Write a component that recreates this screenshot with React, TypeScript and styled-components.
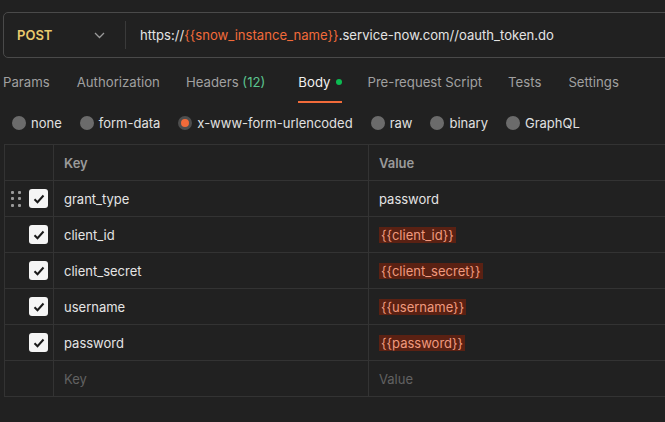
import React from "react";
import styled, { createGlobalStyle } from "styled-components";

const Global = createGlobalStyle`
  html, body { margin: 0; padding: 0; background: #212121; }
  body { font-family: Inter, "Noto Sans", sans-serif; color: #e6e6e6; overflow: hidden; }
  * { box-sizing: border-box; }
`;

const Page = styled.div`
  width: 665px;
  height: 422px;
  background: #212121;
  overflow: hidden;
  padding: 12px 0 0 3px;
`;

const UrlBar = styled.div`
  display: flex;
  align-items: center;
  height: 46px;
  width: 700px;
  border: 1px solid #4a4a4a;
  border-radius: 5px;
`;

const Method = styled.div`
  display: flex;
  align-items: center;
  justify-content: space-between;
  width: 121px;
  padding: 0 20px 0 13px;
  font-size: 13px;
  font-weight: 600;
  color: #e9cb6d;
`;

const Divider = styled.div`
  width: 1px;
  height: 28px;
  background: #3a3a3a;
`;

const Url = styled.div`
  padding-left: 14px;
  font-size: 13.1px;
  color: #e4e4e4;
  white-space: nowrap;
`;

const Var = styled.span`
  color: #f26b3a;
`;

const Tabs = styled.div`
  display: flex;
  height: 42px;
  margin-top: 3px;
`;

const Tab = styled.div<{ $active?: boolean; $gap: number }>`
  display: flex;
  align-items: center;
  gap: 6px;
  margin-right: ${(p) => p.$gap}px;
  font-size: 13.2px;
  color: ${(p) => (p.$active ? "#f0f0f0" : "#a0a0a0")};
  border-bottom: 2px solid ${(p) => (p.$active ? "#f26b3a" : "transparent")};
  padding-top: 2px;
`;

const Count = styled.span`
  color: #5bc48f;
`;

const Dot = styled.span`
  width: 6px;
  height: 6px;
  border-radius: 50%;
  background: #0cbb52;
`;

const Radios = styled.div`
  display: flex;
  align-items: center;
  height: 41px;
  padding-left: 9px;
  padding-bottom: 1px;
`;

const RadioItem = styled.label`
  display: flex;
  align-items: center;
  gap: 5px;
  margin-right: 18px;
  font-size: 13px;
  color: #e0e0e0;
`;

const Circle = styled.span<{ $on?: boolean }>`
  width: 14px;
  height: 14px;
  border-radius: 50%;
  background: ${(p) => (p.$on ? "#f26b3a" : "#6b6b6b")};
  border: ${(p) => (p.$on ? "3px solid #4e4e4e" : "none")};
`;

const Table = styled.div`
  margin-left: 1px;
  width: 700px;
  border-top: 1px solid #333;
  border-left: 1px solid #333;
`;

const Row = styled.div`
  display: grid;
  grid-template-columns: 49px 315px 1fr;
  height: 36px;
  border-bottom: 1px solid #333;
`;

const Cell = styled.div<{ $head?: boolean; $muted?: boolean }>`
  display: flex;
  align-items: center;
  padding-left: 10px;
  border-right: 1px solid #333;
  font-size: 13px;
  font-weight: ${(p) => (p.$head ? 600 : 400)};
  color: ${(p) => (p.$head ? "#9a9a9a" : p.$muted ? "#626262" : "#e4e4e4")};
`;

const Ctrl = styled.div`
  display: flex;
  align-items: center;
  padding-left: 6px;
  gap: 8px;
  border-right: 1px solid #333;
`;

const Handle = styled.div<{ $show?: boolean }>`
  width: 10px;
  display: grid;
  grid-template-columns: 3px 3px;
  gap: 3.5px 4px;
  visibility: ${(p) => (p.$show ? "visible" : "hidden")};
  span {
    width: 3px;
    height: 3px;
    border-radius: 1px;
    background: #9a9a9a;
  }
`;

const Check = styled.div`
  width: 19px;
  height: 19px;
  border-radius: 3px;
  background: #f5f5f5;
  display: flex;
  align-items: center;
  justify-content: center;
`;

const Chip = styled.span`
  display: inline-block;
  line-height: 16px;
  background: #5a2113;
  color: #f09a7e;
  padding: 0 2px;
`;

const Chevron = () => (
  <svg width="11" height="7" viewBox="0 0 11 7" fill="none">
    <path d="M1 1l4.5 4.5L10 1" stroke="#9a9a9a" strokeWidth="1.3" />
  </svg>
);

const Tick = () => (
  <svg width="12" height="10" viewBox="0 0 12 10" fill="none">
    <path d="M1.5 5.2l3 3L10.5 1.5" stroke="#1a1a1a" strokeWidth="2" />
  </svg>
);

const rows = [
  { k: "grant_type", v: "password", chip: false, handle: true },
  { k: "client_id", v: "{{client_id}}", chip: true },
  { k: "client_secret", v: "{{client_secret}}", chip: true },
  { k: "username", v: "{{username}}", chip: true },
  { k: "password", v: "{{password}}", chip: true },
];

const radios = ["none", "form-data", "x-www-form-urlencoded", "raw", "binary", "GraphQL"];

export default function App() {
  return (
    <Page>
      <Global />
      <UrlBar>
        <Method>
          POST
          <Chevron />
        </Method>
        <Divider />
        <Url>
          https://<Var>{"{{snow_instance_name}}"}</Var>.service-now.com//oauth_token.do
        </Url>
      </UrlBar>
      <Tabs>
        <Tab $gap={27}>Params</Tab>
        <Tab $gap={26}>Authorization</Tab>
        <Tab $gap={33}>
          <span>
            Headers <Count>(12)</Count>
          </span>
        </Tab>
        <Tab $active $gap={25}>
          Body <Dot />
        </Tab>
        <Tab $gap={26}>Pre-request Script</Tab>
        <Tab $gap={27}>Tests</Tab>
        <Tab $gap={27}>Settings</Tab>
      </Tabs>
      <Radios>
        {radios.map((r) => (
          <RadioItem key={r}>
            <Circle $on={r === "x-www-form-urlencoded"} />
            {r}
          </RadioItem>
        ))}
      </Radios>
      <Table>
        <Row>
          <Ctrl />
          <Cell $head>Key</Cell>
          <Cell $head>Value</Cell>
        </Row>
        {rows.map((r) => (
          <Row key={r.k}>
            <Ctrl>
              <Handle $show={r.handle}>
                <span /><span /><span /><span /><span /><span />
              </Handle>
              <Check>
                <Tick />
              </Check>
            </Ctrl>
            <Cell>{r.k}</Cell>
            <Cell>{r.chip ? <Chip>{r.v}</Chip> : r.v}</Cell>
          </Row>
        ))}
        <Row>
          <Ctrl />
          <Cell $muted>Key</Cell>
          <Cell $muted>Value</Cell>
        </Row>
      </Table>
    </Page>
  );
}
